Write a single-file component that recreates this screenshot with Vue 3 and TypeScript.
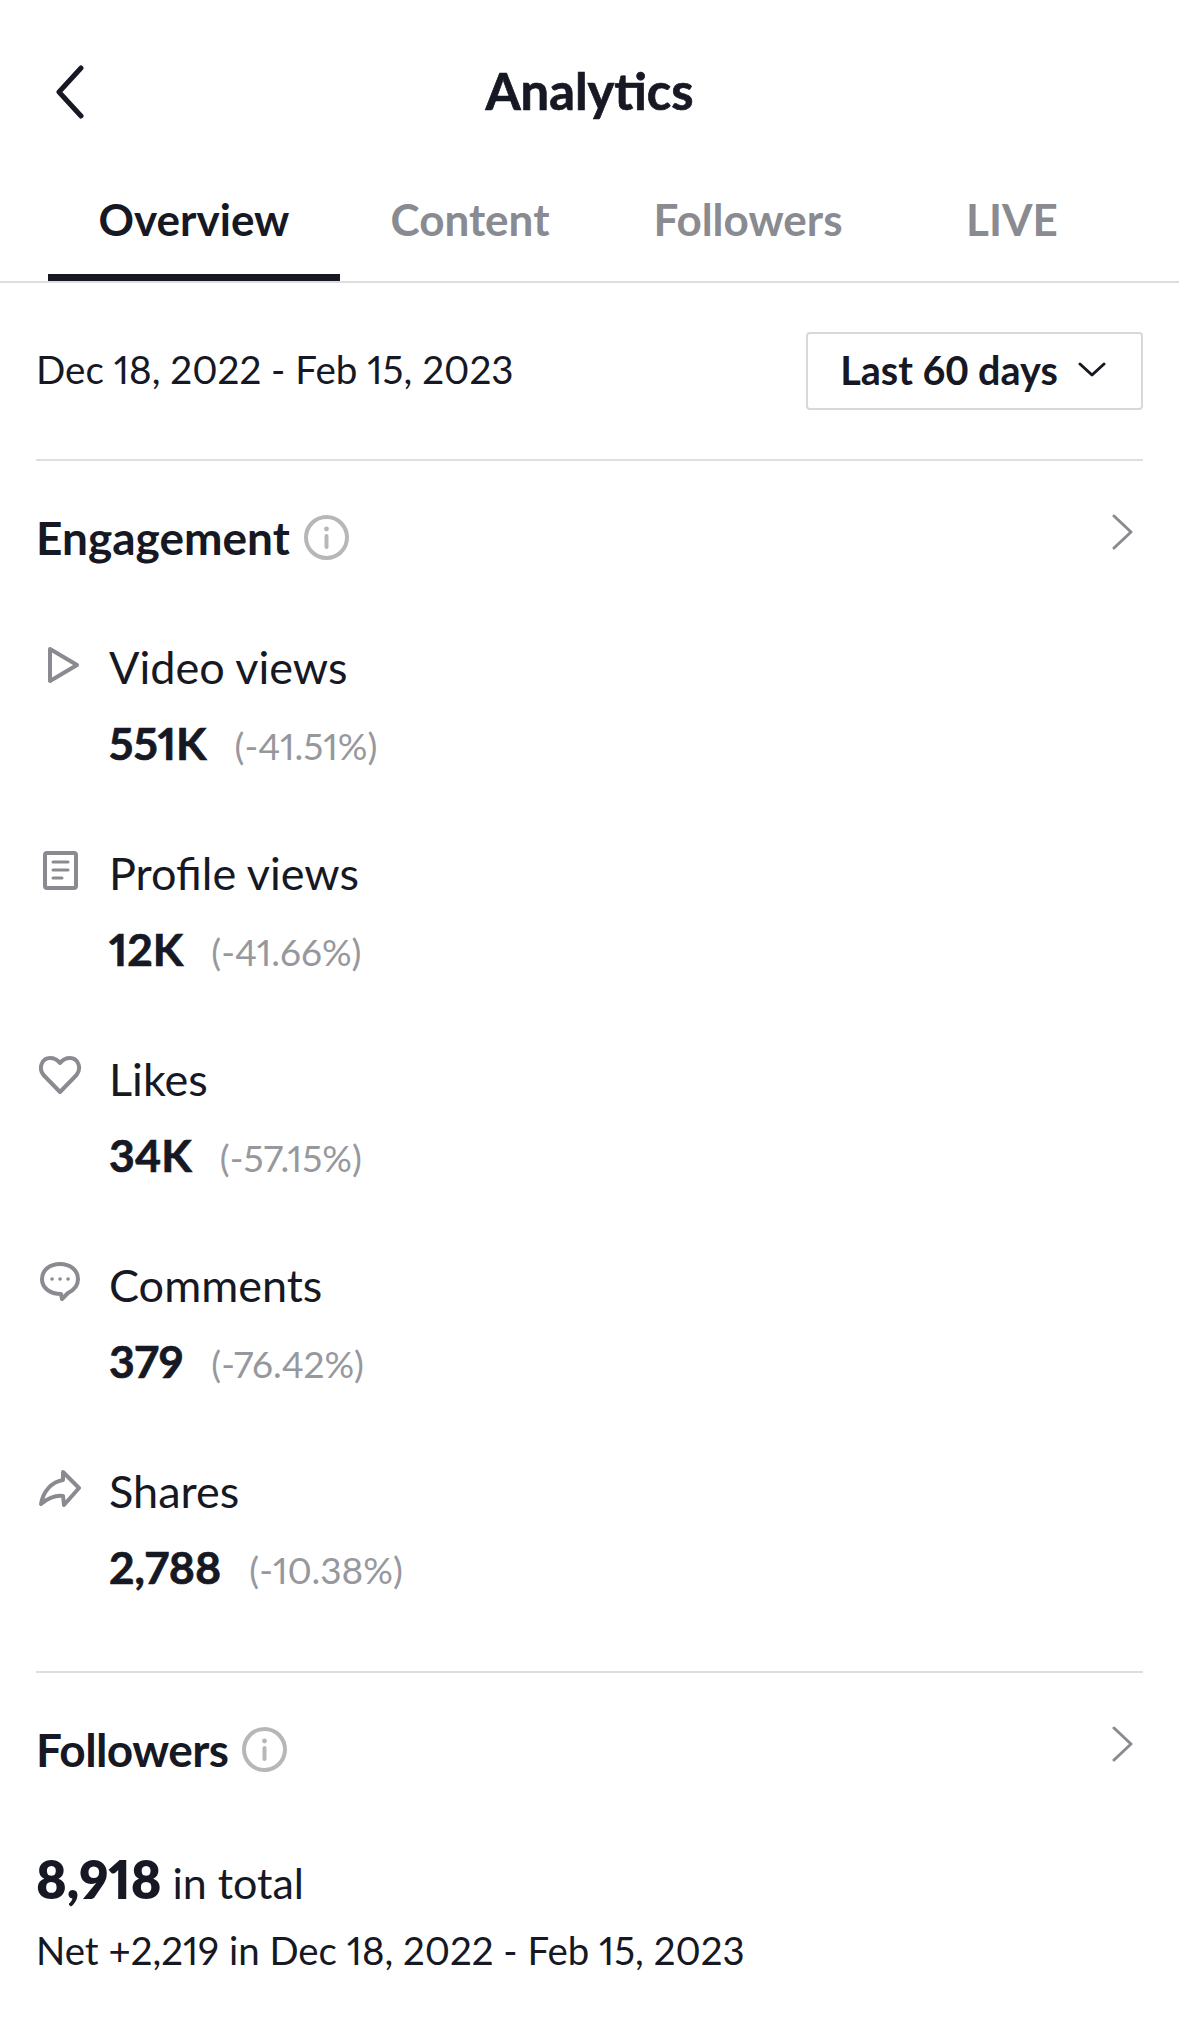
<script setup lang="ts">
const stats = [
  { icon: 'play', label: 'Video views', value: '551K', change: '(-41.51%)' },
  { icon: 'doc', label: 'Profile views', value: '12K', change: '(-41.66%)' },
  { icon: 'heart', label: 'Likes', value: '34K', change: '(-57.15%)' },
  { icon: 'comment', label: 'Comments', value: '379', change: '(-76.42%)' },
  { icon: 'share', label: 'Shares', value: '2,788', change: '(-10.38%)' },
]
</script>

<template>
  <div class="page">
    <header class="top">
      <svg class="back" width="29" height="54" viewBox="0 0 29 54" fill="none">
        <path d="M26 3 L4 27 L26 51" stroke="#161823" stroke-width="5" stroke-linecap="round" stroke-linejoin="round" />
      </svg>
      <h1 class="title">Analytics</h1>
    </header>

    <nav class="tabs">
      <div class="tab active">Overview</div>
      <div class="tab">Content</div>
      <div class="tab">Followers</div>
      <div class="tab">LIVE</div>
    </nav>

    <div class="content">
      <div class="range">
        <span class="dates">Dec 18, 2022 - Feb 15, 2023</span>
        <button class="range-btn">
          Last 60 days
          <svg width="28" height="15" viewBox="0 0 28 15" fill="none">
            <path d="M2 2 L14 13 L26 2" stroke="#161823" stroke-width="3" stroke-linecap="round" stroke-linejoin="round" />
          </svg>
        </button>
      </div>

      <section class="engagement">
        <div class="section-head">
          <div class="head-left">
            <h2>Engagement</h2>
            <svg width="45" height="45" viewBox="0 0 45 45" fill="none">
              <circle cx="22.5" cy="22.5" r="20.5" stroke="#b7b7b9" stroke-width="4" />
              <circle cx="22.5" cy="14" r="2.4" fill="#b7b7b9" />
              <path d="M22.5 21 V32" stroke="#b7b7b9" stroke-width="4" stroke-linecap="round" />
            </svg>
          </div>
          <svg class="more" width="21" height="36" viewBox="0 0 21 36" fill="none">
            <path d="M2 2 L19 18 L2 34" stroke="#8a8b91" stroke-width="3" stroke-linecap="round" stroke-linejoin="round" />
          </svg>
        </div>

        <div class="stats">
          <div v-for="s in stats" :key="s.label" class="stat">
            <svg class="stat-icon" width="44" height="44" viewBox="0 0 44 44" fill="none" stroke="#8a8b91" stroke-width="4" stroke-linecap="round" stroke-linejoin="round">
              <path v-if="s.icon === 'play'" d="M11 7 L38 23 L11 39 Z" />
              <template v-if="s.icon === 'doc'">
                <rect x="6" y="5" width="31" height="35" rx="2" />
                <path d="M14 14 H29 M14 22 H29 M14 30 H23" stroke-width="3" />
              </template>
              <path v-if="s.icon === 'heart'" d="M21 38 L4.5 21 C-1 14 3 4 11 4 C15.5 4 19 6.5 21 9 C23 6.5 26.5 4 31 4 C39 4 43 14 37.5 21 Z" />
              <template v-if="s.icon === 'comment'">
                <path d="M21 4 C31 4 39 10 39 19 C39 25 35 30 29 33 L23 39 L22 34 C11 34 3 28 3 19 C3 10 11 4 21 4 Z" />
                <path d="M13 19 H13.1 M21 19 H21.1 M29 19 H29.1" stroke-width="3.5" />
              </template>
              <path v-if="s.icon === 'share'" d="M24 6 L40 22 L25 39 L24 30 C15 29 8 33 2 38 C4 26 12 16 24 14 Z" />
            </svg>
            <div class="stat-body">
              <div class="stat-label">{{ s.label }}</div>
              <div class="stat-line">
                <span class="stat-value">{{ s.value }}</span>
                <span class="stat-change">{{ s.change }}</span>
              </div>
            </div>
          </div>
        </div>
      </section>

      <section class="followers">
        <div class="section-head">
          <div class="head-left">
            <h2>Followers</h2>
            <svg width="45" height="45" viewBox="0 0 45 45" fill="none">
              <circle cx="22.5" cy="22.5" r="20.5" stroke="#b7b7b9" stroke-width="4" />
              <circle cx="22.5" cy="14" r="2.4" fill="#b7b7b9" />
              <path d="M22.5 21 V32" stroke="#b7b7b9" stroke-width="4" stroke-linecap="round" />
            </svg>
          </div>
          <svg class="more" width="21" height="36" viewBox="0 0 21 36" fill="none">
            <path d="M2 2 L19 18 L2 34" stroke="#8a8b91" stroke-width="3" stroke-linecap="round" stroke-linejoin="round" />
          </svg>
        </div>
        <div class="total"><strong>8,918</strong> in total</div>
        <div class="net">Net +2,219 in Dec 18, 2022 - Feb 15, 2023</div>
      </section>
    </div>
  </div>
</template>

<style>
html, body {
  margin: 0;
  background: #fff;
}
</style>

<style scoped>
.page {
  width: 1179px;
  height: 2021px;
  overflow: hidden;
  background: #fff;
  color: #161823;
  font-family: Lato, "Open Sans", sans-serif;
  font-variant-numeric: proportional-nums;
}

.top {
  position: relative;
  height: 182px;
  display: flex;
  justify-content: center;
  align-items: center;
}

.back {
  position: absolute;
  left: 55px;
  top: 65px;
}

.title {
  margin: 0;
  font-size: 50.7px;
  font-weight: 700;
  line-height: 176px;
  -webkit-text-stroke: 0.7px #161823;
}

.tabs {
  height: 99px;
  padding-left: 48px;
  display: grid;
  grid-template-columns: 292px 260px 296px 232px;
  border-bottom: 2px solid #dedede;
}

.tab {
  height: 99px;
  line-height: 74px;
  text-align: center;
  font-size: 44px;
  font-weight: 700;
  color: #8a8b91;
  box-sizing: border-box;
}

.tab.active {
  color: #161823;
  border-bottom: 7px solid #161823;
}

.content {
  padding: 0 36px;
}

.range {
  height: 176px;
  display: flex;
  justify-content: space-between;
  align-items: center;
  border-bottom: 2px solid #dedede;
}

.dates {
  margin-top: -4px;
  font-size: 38.6px;
}

.range-btn {
  width: 337px;
  height: 78px;
  padding: 0 3px 4px 0;
  display: flex;
  align-items: center;
  justify-content: center;
  gap: 20px;
  background: #fff;
  border: 2px solid #d8d8d8;
  border-radius: 4px;
  font-family: inherit;
  font-size: 39.6px;
  font-weight: 700;
  color: #161823;
}

.section-head {
  height: 152px;
  display: flex;
  justify-content: space-between;
  align-items: center;
}

.head-left {
  display: flex;
  align-items: center;
  gap: 14px;
}

.section-head h2 {
  margin: 0;
  font-size: 46px;
  font-weight: 700;
}

.followers .section-head h2 {
  letter-spacing: -0.6px;
}

.more {
  margin-right: 10px;
  margin-top: -10px;
}

.stats {
  padding-top: 29px;
}

.stat {
  height: 206px;
  display: flex;
}

.stat-icon {
  margin: 0 26px 0 3px;
  flex: none;
}

.stat-label {
  font-size: 45px;
  line-height: 50px;
}

.stat-line {
  margin-top: 24px;
  display: flex;
  align-items: baseline;
  gap: 28px;
}

.stat-value {
  font-size: 44.5px;
  font-weight: 700;
  -webkit-text-stroke: 0.7px #161823;
}

.stat-change {
  font-size: 37px;
  color: #97989d;
}

.engagement {
  height: 1210px;
  border-bottom: 2px solid #dedede;
}

.total {
  margin-top: 23px;
  font-size: 43px;
}

.total strong {
  font-size: 52px;
  font-weight: 800;
}

.net {
  margin-top: 17px;
  font-size: 38.4px;
}
</style>
